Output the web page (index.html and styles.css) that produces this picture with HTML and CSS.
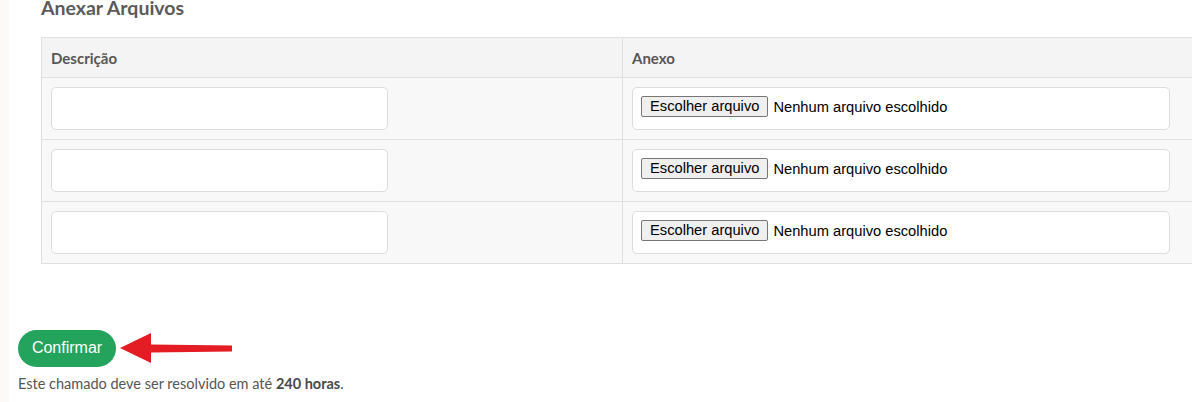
FILE: index.html
```html
<!DOCTYPE html>
<html lang="pt-BR">
<head>
<meta charset="utf-8">
<link rel="stylesheet" href="styles.css">
</head>
<body>
<div class="page">
  <aside class="strip"></aside>
  <main class="main">
    <h3 class="title">Anexar Arquivos</h3>
    <div class="table-wrap">
      <table class="grid">
        <thead>
          <tr><th class="c1">Descrição</th><th class="c2">Anexo</th></tr>
        </thead>
        <tbody>
          <tr>
            <td><div class="field desc"></div></td>
            <td><div class="field file"><span class="file-btn">Escolher arquivo</span><span class="file-txt">Nenhum arquivo escolhido</span></div></td>
          </tr>
          <tr>
            <td><div class="field desc"></div></td>
            <td><div class="field file"><span class="file-btn">Escolher arquivo</span><span class="file-txt">Nenhum arquivo escolhido</span></div></td>
          </tr>
          <tr>
            <td><div class="field desc"></div></td>
            <td><div class="field file"><span class="file-btn">Escolher arquivo</span><span class="file-txt">Nenhum arquivo escolhido</span></div></td>
          </tr>
        </tbody>
      </table>
    </div>
    <div class="actions">
      <button class="confirm">Confirmar</button>
      <svg class="arrow" width="112" height="31" viewBox="0 0 112 31">
        <polygon points="0,15 31,0 31,11.5 112,12.5 112,18.5 31,19.5 31,30" fill="#e41c23"/>
      </svg>
    </div>
    <p class="note">Este chamado deve ser resolvido em até <b>240 horas</b>.</p>
  </main>
</div>
</body>
</html>
```

FILE: styles.css
```css
html, body {
  margin: 0;
  padding: 0;
  background: #fff;
  overflow: hidden;
}
.page {
  display: flex;
  width: 1192px;
  height: 402px;
  font-family: Lato, "Liberation Sans", sans-serif;
  color: #555;
}
.strip {
  width: 9px;
  flex: none;
  background: #fbfaf9;
}
.main {
  flex: 1;
  min-width: 0;
  overflow: hidden;
  padding-left: 9px;
}
.title {
  margin: -3px 0 0 23px;
  font-size: 19.5px;
  font-weight: 700;
  line-height: 22px;
  color: #5b5b5b;
  height: 19px;
}
.table-wrap {
  margin: 21px 0 0 23px;
  width: 1200px;
}
.grid {
  border-collapse: collapse;
  width: 1200px;
  table-layout: fixed;
}
.grid th, .grid td {
  border: 1px solid #e0e0e0;
  text-align: left;
  padding: 0 9px;
}
.grid th {
  background: #f4f4f4;
  height: 38px;
  font-size: 15px;
  font-weight: 700;
  color: #575757;
  padding-top: 1px;
}
.grid th.c1 { width: 562px; }
.grid td {
  background: #f8f8f8;
  height: 61px;
  padding-top: 0;
  padding-bottom: 0;
}
.field {
  box-sizing: border-box;
  height: 43px;
  background: #fff;
  border: 1px solid #dcdcdc;
  border-radius: 5px;
}
.field.desc {
  width: 337px;
}
.field.file {
  width: 538px;
  display: flex;
  align-items: center;
  padding-left: 8px;
  font-family: "Liberation Sans", Arial, sans-serif;
  font-size: 14.7px;
  color: #000;
  padding-bottom: 4px;
}
.file-btn {
  box-sizing: border-box;
  height: 21px;
  line-height: 19px;
  padding: 0 8px;
  background: #efefef;
  border: 1px solid #767676;
  border-radius: 2px;
  margin-right: 5px;
  white-space: nowrap;
}
.file-txt {
  white-space: nowrap;
}
.actions {
  display: flex;
  align-items: center;
  margin: 66px 0 0 0;
}
.confirm {
  margin-left: 0;
  width: 98px;
  height: 37px;
  border: none;
  border-radius: 19px;
  background: #23a35c;
  color: #fff;
  font-family: "Liberation Sans", Arial, sans-serif;
  font-size: 16px;
  padding: 0 0 1px;
}
.arrow {
  margin-left: 4px;
  display: block;
}
.note {
  margin: 8px 0 0 0;
  font-size: 14.5px;
  line-height: 17px;
  color: #555;
}
.note b {
  color: #4a4a4a;
}
```
